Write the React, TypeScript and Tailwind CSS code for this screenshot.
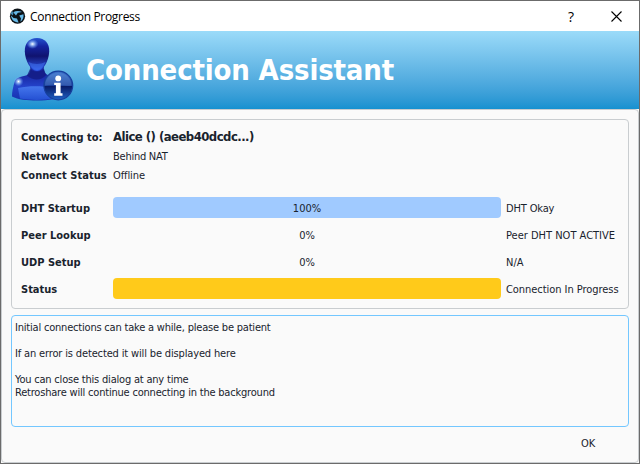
import React from "react";

const label = "w-[92px] shrink-0 whitespace-nowrap text-[11px] font-bold";

function AppIcon() {
  return (
    <svg width="17" height="17" viewBox="0 0 17 17">
      <circle cx="8.500" cy="8.200" r="7.600" fill="#0b1116" />
      <path d="M4.200 4.200C7 2.600 10 2.600 13 4L8.800 4.800 7 7.400Z" fill="#67b9e8" />
      <path d="M14.400 6.200C15 9 14 11.600 11.400 13.800L12 10.400 10.200 7.400Z" fill="#67b9e8" />
      <path d="M2 7.600 4.600 10 8 10.400 9.600 14.400C5.400 14.600 2.400 12 2 7.600Z" fill="#67b9e8" />
      <path d="M1.400 5.200 3.400 3 4.400 5.800 3.600 7.600Z" fill="#458bb4" />
    </svg>
  );
}

function UserIcon() {
  return (
    <svg width="64" height="66" viewBox="0 0 64 66">
      <defs>
        <linearGradient id="head" x1="0" y1="0" x2="0" y2="1">
          <stop offset="0" stopColor="#2453cf" />
          <stop offset=".25" stopColor="#1524a0" />
          <stop offset=".55" stopColor="#10136f" />
          <stop offset="1" stopColor="#2f5aec" />
        </linearGradient>
        <linearGradient id="body" x1="0" y1="0" x2="0" y2="1">
          <stop offset="0" stopColor="#17259c" />
          <stop offset=".3" stopColor="#1a2ba8" />
          <stop offset=".6" stopColor="#2443cb" />
          <stop offset="1" stopColor="#1532ae" />
        </linearGradient>
        <linearGradient id="chest" x1="0" y1="0" x2="0" y2="1">
          <stop offset="0" stopColor="#4d83f5" />
          <stop offset="1" stopColor="#2858dc" />
        </linearGradient>
        <radialGradient id="shine">
          <stop offset="0" stopColor="#fff" />
          <stop offset=".3" stopColor="#b9d9ff" stopOpacity=".8" />
          <stop offset="1" stopColor="#5c9cff" stopOpacity="0" />
        </radialGradient>
        <linearGradient id="info" x1="0" y1="0" x2="0" y2="1">
          <stop offset="0" stopColor="#3d74cb" />
          <stop offset=".5" stopColor="#1a3f9c" />
          <stop offset=".52" stopColor="#081a67" />
          <stop offset="1" stopColor="#1f62c5" />
        </linearGradient>
      </defs>
      <path d="M19 30c1 6 0 8.500-5 9.800C8 41.200 5 42 3.600 46 2 51 1 56 1 60.500c6 3.200 15 4 25 4 12 0 22-1.500 25-5 0-12-3-17.500-10-19.200-6-1.300-9-3.300-8-10.300Z" fill="url(#body)" />
      <path d="M7 52c11-2.500 24-2.500 34 0l3 10c-10 2.500-25 2.500-35 .5Z" fill="url(#chest)" opacity=".8" />
      <path d="M19 33c4 3.500 10 3.500 14 0l2 6c-5 6-13 6-19 0.500Z" fill="#131c83" opacity=".8" />
      <path d="M26 2c8 0 12.500 5.500 12.200 13.500C37.800 25 32.500 35 26 35S14.200 25 13.800 15.500C13.500 7.500 18 2 26 2Z" fill="url(#head)" />
      <path d="M17.500 26c5 2.500 12 2.500 17 0-2 5-5 8-8.500 8s-6.500-3-8.500-8Z" fill="#447af8" opacity=".5" />
      <ellipse cx="21.500" cy="8" rx="6" ry="5" fill="url(#shine)" />
      <circle cx="7.500" cy="45.500" r="5" fill="url(#shine)" />
      <circle cx="47.300" cy="49.500" r="14.400" fill="url(#info)" stroke="#173f9d" strokeWidth="1.200" />
      <path d="M34 49.500C34 42 40 36.700 47.300 36.700S60.500 42 60.500 49.500c-8 1-15-2-26.500 0Z" fill="#8fbcf1" opacity=".22" />
      <circle cx="47.200" cy="42.400" r="2.900" fill="#fff" />
      <path d="M43.200 46.700h6.400v10.600h1.900v2.400h-8.300v-2.400h1.700v-8.200h-1.700Z" fill="#fff" />
    </svg>
  );
}

interface ProgressProps {
  name: string;
  value: string;
  bar: string;
  note: string;
  noteSpacing: string;
}

function ProgressRow({ name, value, bar, note, noteSpacing }: ProgressProps) {
  return (
    <div className="flex h-[21px] items-center">
      <span className={`${label} pt-[2px]`}>{name}</span>
      <div className={`flex h-[21px] w-[388px] shrink-0 items-center justify-center rounded-[4px] pt-[2px] ${bar}`}>{value}</div>
      <span className={`ml-[5px] whitespace-nowrap pt-[2px] ${noteSpacing}`}>{note}</span>
    </div>
  );
}

export default function App() {
  return (
    <div className="flex h-[464px] w-[640px] flex-col overflow-hidden border border-[#6b6b6b] bg-[#fafafa] font-['DejaVu_Sans_Condensed','DejaVu_Sans',sans-serif] text-[11px] leading-[13px] text-[#19232d] [font-stretch:condensed]">
      <header className="flex h-[30px] shrink-0 items-center bg-white pl-2 font-['Open_Sans',sans-serif] text-[12px] text-black [font-stretch:normal]">
        <AppIcon />
        <span className="ml-[4px] tracking-[-0.32px]">Connection Progress</span>
        <span className="ml-auto mr-[37px] text-[14px]">?</span>
        <svg className="mr-[17px]" width="11" height="11" viewBox="0 0 11 11" stroke="#000" strokeWidth="1.1">
          <path d="m.5.5 10 10M10.5.5l-10 10" />
        </svg>
      </header>
      <div className="flex h-[78px] shrink-0 items-start bg-linear-to-b from-[#9bdbf9] to-[#1591d0] pl-[10px] pt-[5px]">
        <UserIcon />
        <h1 className="ml-[11px] mt-[16px] whitespace-nowrap text-[29px] leading-[36px] font-bold tracking-[-0.16px] text-white">Connection Assistant</h1>
      </div>
      <main className="flex min-h-0 flex-1 flex-col rounded-[4px] border border-[#c9cdd0] px-[9px] pt-[9px]">
        <section className="h-[190px] shrink-0 rounded-[4px] border border-[#c9cdd0] pl-[9px] pt-[7px]">
          <div className="flex h-[19px] items-center">
            <span className={`${label} pt-[2px] tracking-[-0.04px]`}>Connecting to:</span>
            <span className="text-[13px] font-bold tracking-[-0.54px]">Alice () (aeeb40dcdc...)</span>
          </div>
          <div className="flex h-[19px] items-center pt-[2px]">
            <span className={label}>Network</span>
            <span className="tracking-[-0.25px]">Behind NAT</span>
          </div>
          <div className="flex h-[19px] items-center pt-[2px]">
            <span className={`${label} tracking-[0.04px]`}>Connect Status</span>
            <span className="tracking-[-0.1px]">Offline</span>
          </div>
          <div className="mt-[13px] flex flex-col gap-[6px]">
            <ProgressRow name="DHT Startup" value="100%" bar="bg-[#a0caff]" note="DHT Okay" noteSpacing="tracking-[-0.15px]" />
            <ProgressRow name="Peer Lookup" value="0%" bar="" note="Peer DHT NOT ACTIVE" noteSpacing="" />
            <ProgressRow name="UDP Setup" value="0%" bar="" note="N/A" noteSpacing="" />
            <ProgressRow name="Status" value="" bar="bg-[#ffca1a]" note="Connection In Progress" noteSpacing="tracking-[-0.05px]" />
          </div>
        </section>
        <section className="mt-[6px] h-[112px] shrink-0 rounded-[4px] border border-[#73c7ff] pl-[3px] pt-[5px] tracking-[-0.2px]">
          <p>Initial connections can take a while, please be patient</p>
          <p className="mt-[13px] tracking-[-0.15px]">If an error is detected it will be displayed here</p>
          <p className="mt-[13px]">You can close this dialog at any time</p>
          <p>Retroshare will continue connecting in the background</p>
        </section>
        <footer className="mt-[10px] flex justify-end pr-[34px]">
          <button className="tracking-[-0.2px]">OK</button>
        </footer>
      </main>
    </div>
  );
}
